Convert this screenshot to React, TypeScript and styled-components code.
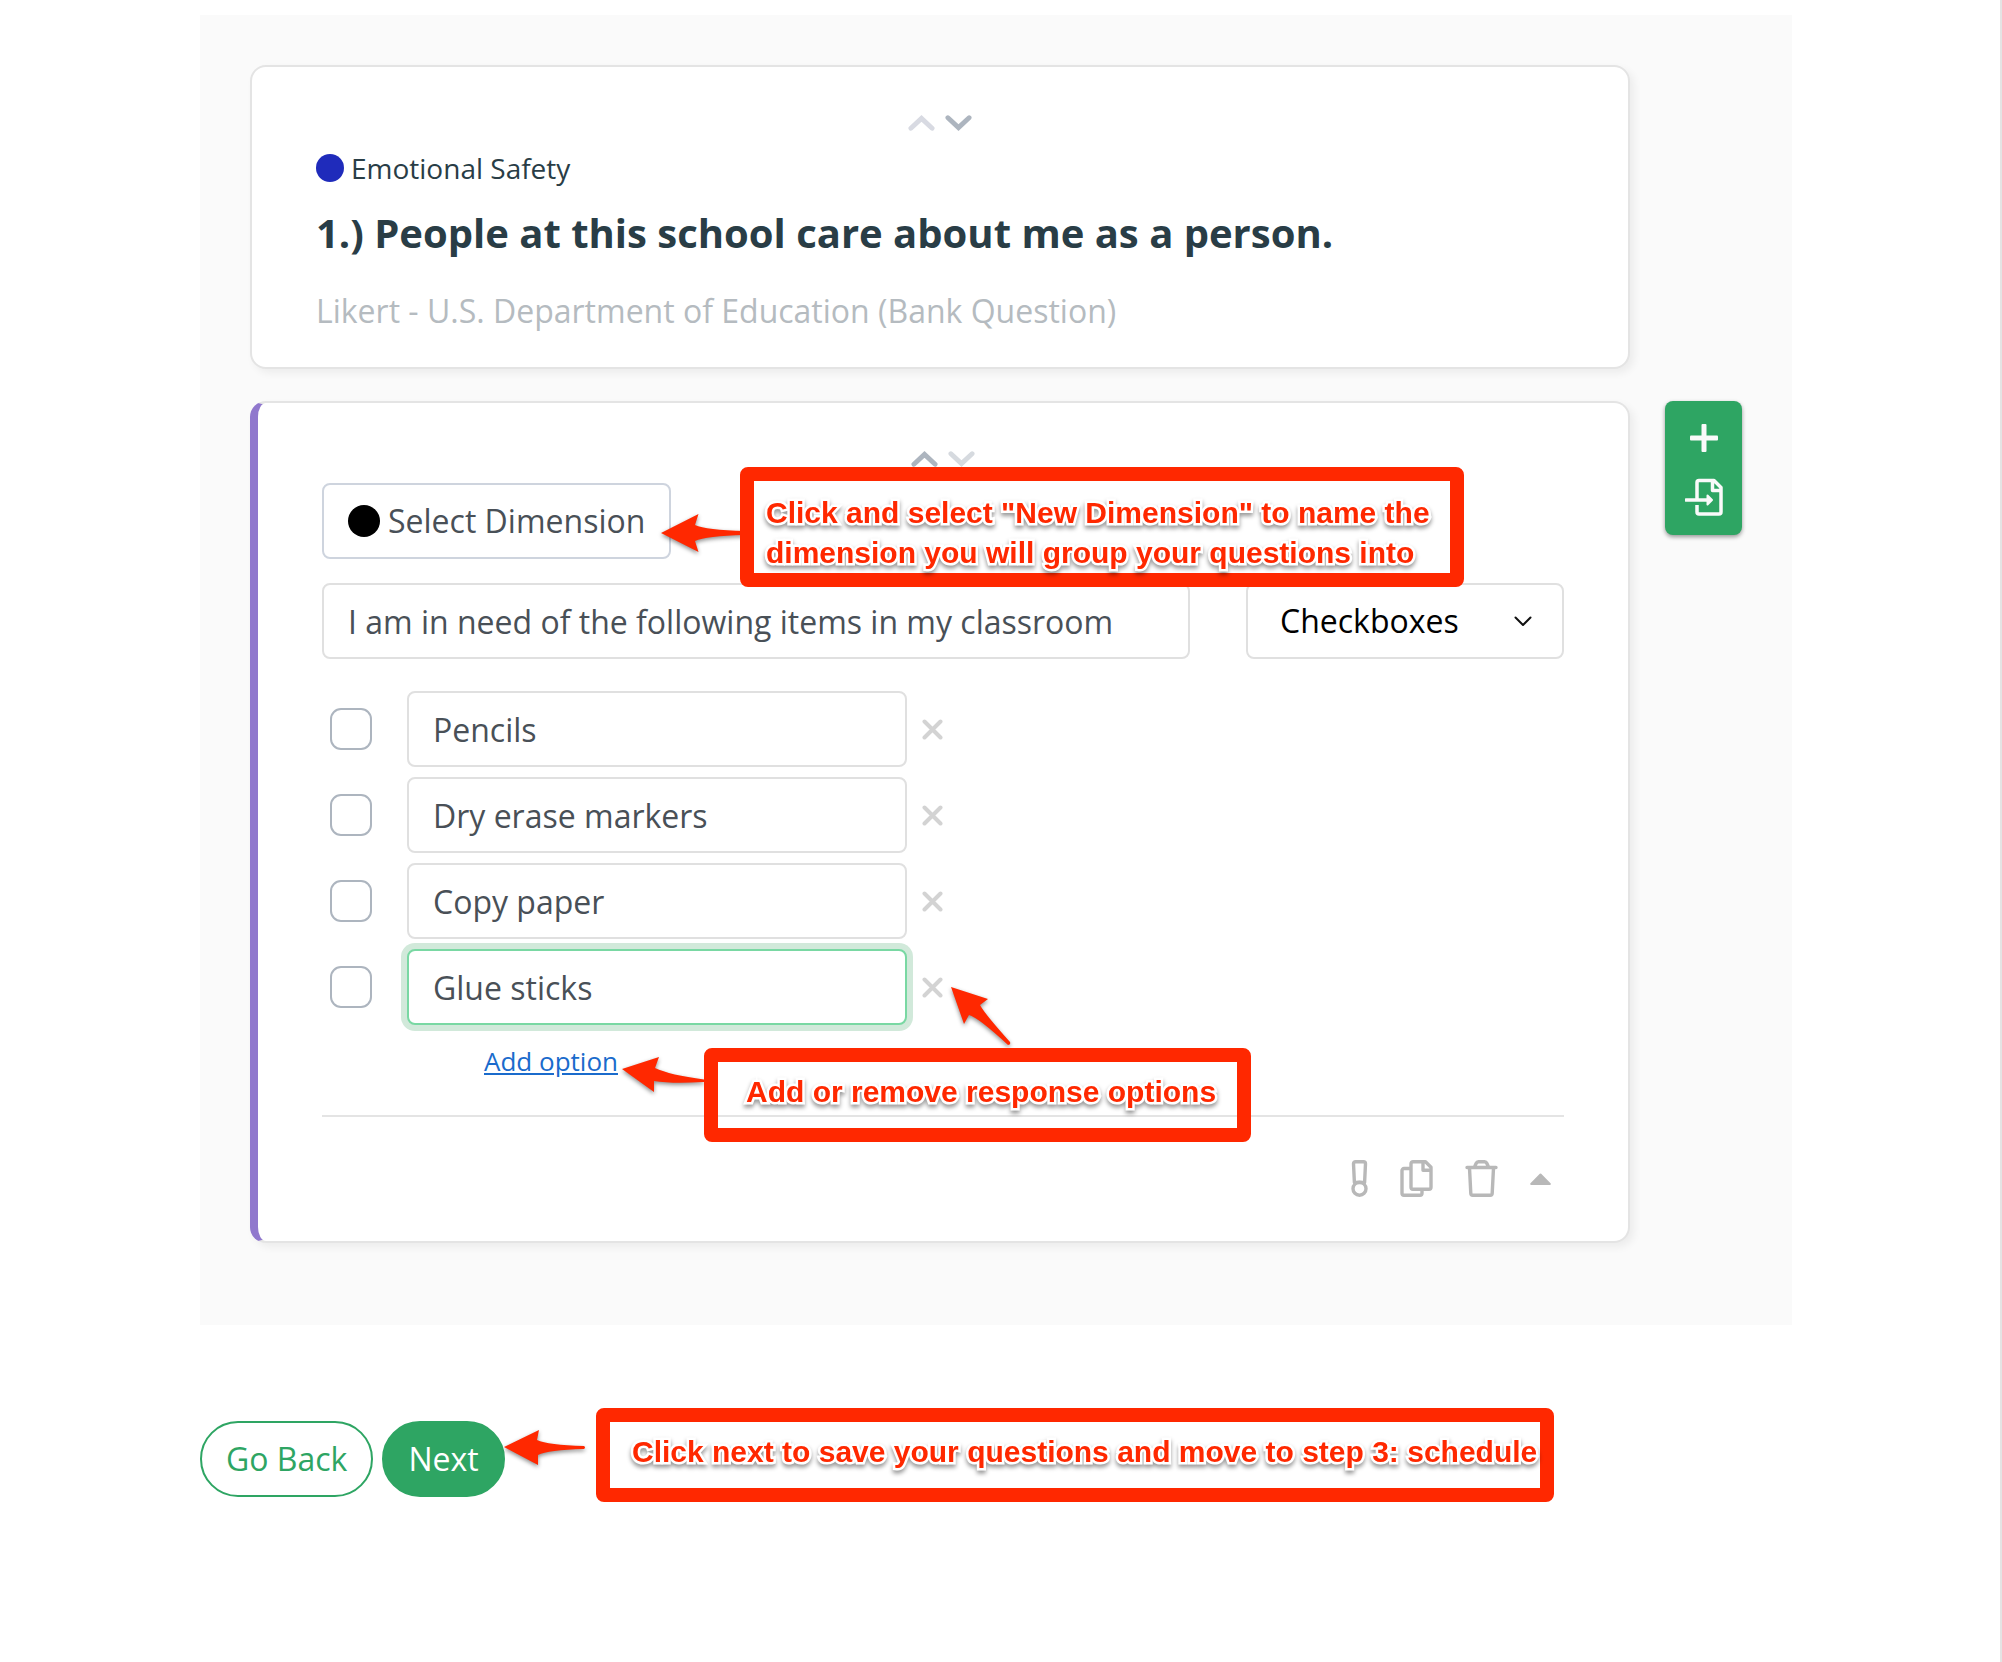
import React, { useState } from "react";
import styled, { createGlobalStyle } from "styled-components";

const GlobalStyle = createGlobalStyle`
  *, *::before, *::after { box-sizing: border-box; }
  body {
    margin: 0;
    background: #fff;
    color: #293d46;
    font-family: "Open Sans", "Noto Sans", sans-serif;
    font-size: 32px;
    line-height: 44px;
  }
  button, input, select { font: inherit; margin: 0; }
  button { cursor: pointer; }
`;

const Page = styled.main`
  min-height: 100vh;
  padding: 15px 208px 80px 200px;
  border-right: 2px solid #e4e4e4;
`;

const Panel = styled.section`
  display: grid;
  grid-template-columns: minmax(0, 1fr) 77px;
  align-items: start;
  gap: 32px 35px;
  padding: 50px 50px 82px;
  background: #fafafa;
`;

const Card = styled.article<{ $active?: boolean }>`
  position: relative;
  grid-column: 1;
  padding: 40px 64px ${(p) => (p.$active ? 44 : 34)}px;
  background: #fff;
  border: 2px solid #e4e4e4;
  border-left: ${(p) => (p.$active ? "8px solid #9078cd" : "2px solid #e4e4e4")};
  border-radius: 16px;
  box-shadow: 4px 4px 8px rgba(0, 0, 0, 0.06);
`;

const Mover = styled.div`
  display: flex;
  justify-content: center;
  gap: 10px;
  margin-bottom: 8px;
`;

const IconButton = styled.button<{ $color: string }>`
  display: flex;
  align-items: center;
  justify-content: center;
  padding: 0;
  border: 0;
  background: none;
  color: ${(p) => p.$color};
`;

const MoveButton = styled(IconButton)`
  width: 27px;
  height: 32px;
`;

const Tag = styled.div`
  display: flex;
  align-items: center;
  gap: 7px;
  font-size: 28px;
  line-height: 42px;
`;

const Dot = styled.span<{ $size: number; $color: string }>`
  flex: none;
  width: ${(p) => p.$size}px;
  height: ${(p) => p.$size}px;
  border-radius: 50%;
  background: ${(p) => p.$color};
`;

const Question = styled.h2`
  margin: 17px 0 29px;
  font-size: 40px;
  line-height: 54px;
  font-weight: 700;
`;

const Source = styled.p`
  margin: 0;
  color: #b5bbc0;
`;

const DimensionButton = styled.button`
  display: flex;
  align-items: center;
  gap: 8px;
  height: 76px;
  padding: 0 24px;
  border: 2px solid #ced4de;
  border-radius: 8px;
  background: #fff;
  color: #495057;
`;

const Field = styled.input<{ $focused?: boolean }>`
  min-width: 0;
  height: 76px;
  padding: 0 24px;
  border: 2px solid ${(p) => (p.$focused ? "#79d8a3" : "#e0e0e0")};
  border-radius: 8px;
  outline: none;
  background: #fff;
  color: #495057;
  box-shadow: ${(p) => (p.$focused ? "0 0 0 6px #d1e9da" : "none")};
`;

const QuestionRow = styled.div`
  display: flex;
  gap: 56px;
  margin: 24px 0 32px;

  ${Field} { flex: 1; }
`;

const SelectBox = styled.div`
  display: grid;
  width: 318px;
  align-items: center;

  > * { grid-area: 1 / 1; }
  > svg {
    justify-self: end;
    margin-right: 32px;
    pointer-events: none;
  }
`;

const TypeSelect = styled.select`
  appearance: none;
  width: 100%;
  height: 76px;
  padding: 0 32px;
  border: 2px solid #e0e0e0;
  border-radius: 8px;
  background: #fff;
  color: #000;
`;

const Options = styled.ul`
  display: flex;
  flex-direction: column;
  gap: 10px;
  margin: 0;
  padding: 0 0 0 8px;
  list-style: none;
`;

const OptionRow = styled.li`
  display: flex;
  align-items: center;

  ${Field} {
    width: 500px;
    margin: 0 15px 0 35px;
  }
`;

const Tick = styled.input`
  appearance: none;
  flex: none;
  width: 42px;
  height: 42px;
  border: 2px solid #adb5bf;
  border-radius: 11px;
  background: #fff;

  &:checked { background: #2ea563; }
`;

const AddLink = styled.a`
  display: block;
  width: fit-content;
  margin: 18px 0 36px 162px;
  color: #1a6bcc;
  font-size: 26px;
  line-height: 36px;
  text-decoration: underline;
`;

const CardFooter = styled.footer`
  display: flex;
  justify-content: flex-end;
  align-items: center;
  gap: 32px;
  padding: 43px 13px 0 0;
  border-top: 2px solid #e4e4e4;
`;

const SideTools = styled.aside`
  display: flex;
  flex-direction: column;
  align-items: center;
  gap: 21px;
  padding: 18px 0 19px;
  border-radius: 8px;
  background: #2ea563;
  box-shadow: 0 2px 4px rgba(0, 0, 0, 0.4);
`;

const ToolButton = styled(IconButton)`
  width: 100%;
  height: 38px;
`;

const Actions = styled.nav`
  position: relative;
  display: flex;
  gap: 9px;
  margin-top: 96px;
`;

const PillButton = styled.button<{ $primary?: boolean }>`
  height: 76px;
  padding: 0 24px;
  border: 2px solid #2ea563;
  border-radius: 38px;
  background: ${(p) => (p.$primary ? "#2ea563" : "#fff")};
  color: ${(p) => (p.$primary ? "#fff" : "#2ea563")};
`;

/* Callouts float over the form, so they are placed against their host. */
const Callout = styled.div<{ $x: number; $y: number; $w: number; $h: number; $pad: string }>`
  position: absolute;
  z-index: 2;
  left: ${(p) => p.$x}px;
  top: ${(p) => p.$y}px;
  width: ${(p) => p.$w}px;
  height: ${(p) => p.$h}px;
  padding: ${(p) => p.$pad};
  border: 14px solid #ff2800;
  border-radius: 8px;
  pointer-events: none;
`;

const CalloutText = styled.p`
  margin: 0;
  color: #ff2800;
  font-family: "Liberation Sans", Arial, sans-serif;
  font-size: 30px;
  line-height: 40px;
  font-weight: 700;
  white-space: nowrap;
  -webkit-text-stroke: 5px #fff;
  paint-order: stroke fill;
  filter: drop-shadow(0 3px 2px rgba(0, 0, 0, 0.4));
`;

const ArrowSvg = styled.svg<{ $x: number; $y: number }>`
  position: absolute;
  z-index: 1;
  left: ${(p) => p.$x}px;
  top: ${(p) => p.$y}px;
  overflow: visible;
  pointer-events: none;
  filter: drop-shadow(0 2px 2px rgba(0, 0, 0, 0.45));
`;

function Arrow({ x, y, w, h, d }: { x: number; y: number; w: number; h: number; d: string }) {
  return (
    <ArrowSvg $x={x} $y={y} width={w} height={h} aria-hidden="true">
      <path d={d} fill="#ff2800" />
    </ArrowSvg>
  );
}

function Chevron({ up }: { up?: boolean }) {
  return (
    <svg width="28" height="16" viewBox="0 0 28 16" fill="none" stroke="currentColor" strokeWidth="5" strokeLinecap="round" strokeLinejoin="miter">
      <path d={up ? "M3 13.5 14 3.2 25 13.5" : "M3 2.5 14 12.8 25 2.5"} />
    </svg>
  );
}

function MoveControls({ up, down }: { up: string; down: string }) {
  return (
    <Mover>
      <MoveButton type="button" aria-label="Move up" $color={up}><Chevron up /></MoveButton>
      <MoveButton type="button" aria-label="Move down" $color={down}><Chevron /></MoveButton>
    </Mover>
  );
}

const initialOptions = ["Pencils", "Dry erase markers", "Copy paper", "Glue sticks"];

export default function App() {
  const [question, setQuestion] = useState("I am in need of the following items in my classroom");
  const [options, setOptions] = useState(initialOptions);
  const [focused, setFocused] = useState(3);

  return (
    <>
      <GlobalStyle />
      <Page>
        <Panel>
          <Card>
            <MoveControls up="#d8dae2" down="#adb5bf" />
            <Tag><Dot $size={28} $color="#1f2bbb" />Emotional Safety</Tag>
            <Question>1.) People at this school care about me as a person.</Question>
            <Source>Likert - U.S. Department of Education (Bank Question)</Source>
          </Card>

          <Card $active>
            <MoveControls up="#adb5bf" down="#d6dadf" />
            <DimensionButton type="button"><Dot $size={32} $color="#000" />Select Dimension</DimensionButton>
            <QuestionRow>
              <Field aria-label="Question" value={question} onChange={(e) => setQuestion(e.target.value)} />
              <SelectBox>
                <TypeSelect aria-label="Response type" defaultValue="Checkboxes">
                  <option>Checkboxes</option>
                  <option>Likert</option>
                </TypeSelect>
                <svg width="18" height="11" viewBox="0 0 18 11" fill="none" stroke="#111" strokeWidth="2" strokeLinecap="round" strokeLinejoin="round">
                  <path d="M1.500 1.500 9 9l7.500-7.500" />
                </svg>
              </SelectBox>
            </QuestionRow>
            <Options>
              {options.map((option, i) => (
                <OptionRow key={i}>
                  <Tick type="checkbox" aria-label={option} />
                  <Field
                    aria-label={`Option ${i + 1}`}
                    value={option}
                    $focused={focused === i}
                    onFocus={() => setFocused(i)}
                    onChange={(e) => setOptions(options.map((o, j) => (j === i ? e.target.value : o)))}
                  />
                  <IconButton
                    type="button"
                    aria-label={`Remove ${option}`}
                    $color="#d3d3d3"
                    onClick={() => setOptions(options.filter((_, j) => j !== i))}
                  >
                    <svg width="21" height="21" viewBox="0 0 21 21" fill="none" stroke="currentColor" strokeWidth="4" strokeLinecap="round">
                      <path d="M2.5 2.5l16 16M18.5 2.5l-16 16" />
                    </svg>
                  </IconButton>
                </OptionRow>
              ))}
            </Options>
            <AddLink href="#add" onClick={(e) => { e.preventDefault(); setOptions([...options, ""]); }}>Add option</AddLink>
            <CardFooter>
              <IconButton type="button" aria-label="Required" $color="#b8b8b8">
                <svg width="17" height="37" viewBox="0 0 17 37" fill="none" stroke="currentColor" strokeWidth="3.400">
                  <path d="M4.5 1.700h8a2 2 0 0 1 2 2L13.6 22.5H3.4L2.500 3.700a2 2 0 0 1 2-2z" strokeLinejoin="round" />
                  <circle cx="8.500" cy="28.700" r="6.500" />
                </svg>
              </IconButton>
              <IconButton type="button" aria-label="Duplicate" $color="#b8b8b8">
                <svg width="33" height="37" viewBox="0 0 33 37" fill="none" stroke="currentColor" strokeWidth="3.400" strokeLinejoin="round">
                  <path d="M13 1.700h12.500l5.500 5.500v20a2 2 0 0 1-2 2H13a2 2 0 0 1-2-2v-23.500a2 2 0 0 1 2-2zM23 1.700v8.500h8" />
                  <path d="M10.500 8.500H4a2 2 0 0 0-2 2V33.300a2 2 0 0 0 2 2H20a2 2 0 0 0 2-2V29.500" />
                </svg>
              </IconButton>
              <IconButton type="button" aria-label="Delete" $color="#b8b8b8">
                <svg width="33" height="37" viewBox="0 0 33 37" fill="none" stroke="currentColor" strokeWidth="3.400" strokeLinejoin="round" strokeLinecap="round">
                  <path d="M2 7.500h29M4.500 8l1.300 25.300a2 2 0 0 0 2 2h17.400a2 2 0 0 0 2-2L28.500 8M9.500 7l1.700-3.800a2.500 2.500 0 0 1 2.300-1.500h6a2.500 2.500 0 0 1 2.300 1.500l1.700 3.800" />
                </svg>
              </IconButton>
              <IconButton type="button" aria-label="Collapse" $color="#b8b8b8">
                <svg width="21" height="12" viewBox="0 0 21 12" fill="currentColor" stroke="currentColor" strokeWidth="2" strokeLinejoin="round">
                  <path d="M1.200 11 10.500 1.500 19.800 11z" />
                </svg>
              </IconButton>
            </CardFooter>

            <Arrow x={403} y={111} w={84} h={40} d="M0 19 37.500 0 34 11Q45 16 84 17V21Q45 22 34 27L37.500 38z" />
            <Callout $x={482} $y={64} $w={724} $h={120} $pad="12px 12px 0">
              <CalloutText>
                Click and select "New Dimension" to name the
                <br />
                dimension you will group your questions into
              </CalloutText>
            </Callout>
            <Arrow x={364} y={654} w={84} h={36} d="M0 12 37 0 33 11Q48 18 82 22.500V25Q50 27 32 24L32 35z" />
            <Arrow x={693} y={584} w={62} h={60} d="M0 0 37 12 29 18Q33 26 59 55Q60 58 57 58Q28 31 18 28L13 37z" />
            <Callout $x={446} $y={645} $w={547} $h={94} $pad="10px 28px 0">
              <CalloutText>Add or remove response options</CalloutText>
            </Callout>
          </Card>

          <SideTools>
            <ToolButton type="button" aria-label="Add question" $color="#fafafa">
              <svg width="28" height="28" viewBox="0 0 28 28" fill="currentColor">
                <rect x="11.500" y="0" width="5" height="28" rx="1" />
                <rect x="0" y="11.500" width="28" height="5" rx="1" />
              </svg>
            </ToolButton>
            <ToolButton type="button" aria-label="Import question" $color="#fafafa">
              <svg width="38" height="38" viewBox="0 0 38 38" fill="none" stroke="currentColor" strokeWidth="3.500" strokeLinejoin="round">
                <path d="M12 21V4.500a2 2 0 0 1 2-2H29L36 9.500V34a2 2 0 0 1-2 2H14a2 2 0 0 1-2-2V27M27.500 2.500V12.500H36" />
                <path d="M1 22h22" strokeLinecap="round" />
                <path d="M22.500 17.500 27 22 22.500 26.500z" fill="currentColor" strokeWidth="2" />
              </svg>
            </ToolButton>
          </SideTools>
        </Panel>

        <Actions aria-label="Survey steps">
          <PillButton type="button">Go Back</PillButton>
          <PillButton type="button" $primary>Next</PillButton>
          <Arrow x={304} y={9} w={82} h={36} d="M0 17 35 0 33 10Q44 15 80 16Q82 17.500 80 19Q44 20 34 25L34 35z" />
          <Callout $x={396} $y={-13} $w={958} $h={94} $pad="10px 22px 0">
            <CalloutText>Click next to save your questions and move to step 3: schedule</CalloutText>
          </Callout>
        </Actions>
      </Page>
    </>
  );
}
